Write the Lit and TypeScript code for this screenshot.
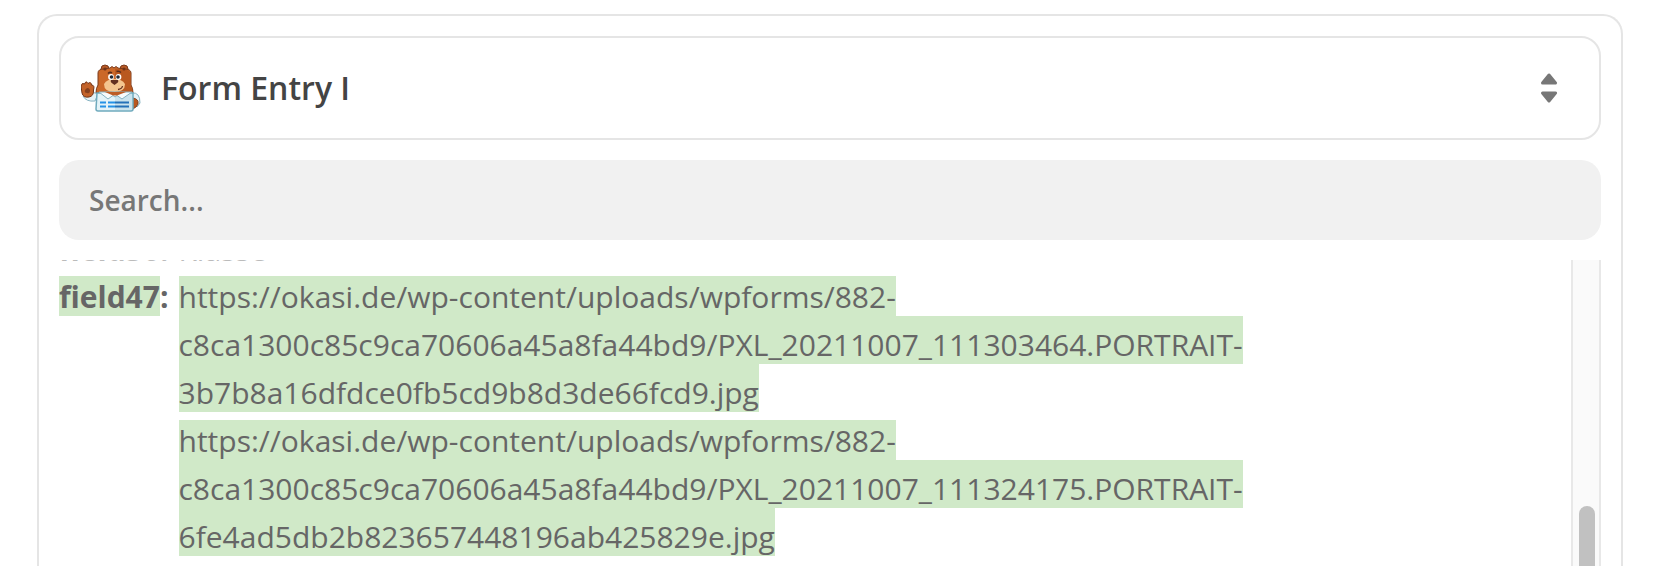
import { LitElement, html, css, svg } from "lit";
import { customElement, property } from "lit/decorators.js";

interface Entry {
  label: string;
  marked: boolean;
  values: string[][];
}

const entries: Entry[] = [
  { label: "field36", marked: false, values: [["Klasse"]] },
  {
    label: "field47",
    marked: true,
    values: [
      [
        "https://okasi.de/wp-content/uploads/wpforms/882-",
        "c8ca1300c85c9ca70606a45a8fa44bd9/PXL_20211007_111303464.PORTRAIT-",
        "3b7b8a16dfdce0fb5cd9b8d3de66fcd9.jpg",
      ],
      [
        "https://okasi.de/wp-content/uploads/wpforms/882-",
        "c8ca1300c85c9ca70606a45a8fa44bd9/PXL_20211007_111324175.PORTRAIT-",
        "6fe4ad5db2b823657448196ab425829e.jpg",
      ],
    ],
  },
];

const bear = svg`
  <g stroke="#7a3a1c" stroke-width="1">
    <circle cx="25" cy="5" r="4" fill="#b75a26"/><circle cx="44" cy="5" r="4" fill="#b75a26"/>
    <path d="M16 29 Q16 24 18 21 V9 Q18 5 24 5 L30 4 L32 2.500 L34 4 L36 2.500 L38 4 L44 5 Q51 5 51 9 V21 Q53 24 53 29 Z" fill="#cb6829"/>
  </g>
  <path d="M35 4.500 L44 5.500 Q50.500 6 50.500 10 V21 Q52.500 24 52.500 29 H35Z" fill="#b9581f"/>
  <circle cx="25" cy="5" r="1.600" fill="#713317"/><circle cx="44" cy="5" r="1.600" fill="#713317"/>
  <path d="M24 20 Q27 15 34.500 15 Q42 15 45 20 Q45 28 34.500 28 Q24 28 24 20Z" fill="#f4c58f"/>
  <path d="M28 9.500 Q30 7.500 32 9 M36.500 7.500 Q39 6.500 41 8.500" fill="none" stroke="#572b1c" stroke-width="1.500"/>
  <circle cx="31" cy="13" r="2.900" fill="#fff"/><circle cx="38.500" cy="13" r="2.900" fill="#fff"/>
  <circle cx="31.500" cy="13" r="1.800" fill="#202936"/><circle cx="38" cy="13" r="1.800" fill="#202936"/>
  <path d="M31 16 H38 Q39 18 36.500 19.500 L34.500 21 L32.500 19.500 Q30 18 31 16Z" fill="#633020"/>
  <path d="M38 25.500 Q42 25 42.500 22" fill="none" stroke="#633020" stroke-width="1.300"/>
  <path d="M3 32 Q6 38 15 37 L18 30 L12 28Z M52 29 Q60 28 60 39 L57 43 L52 38Z" fill="#e4f1f6" stroke="#86b3c2"/>
  <path d="M1 22 Q2 18 4.500 20 Q6 16 8 19.500 Q11 17 11.500 21 Q15 21 13.500 26 Q14 32 9 33 Q3 34 2 29Z" fill="#c36229" stroke="#713317"/>
  <path d="M5 26 Q8 22 10 26 Q10 30 7 29 Q4 29 5 26Z" fill="#85401e"/>
  <path d="M53 34 Q59 35 58 40 Q57 43 53 45Z" fill="#b9581f" stroke="#713317" stroke-width=".8"/>
  <path d="M17 29 H53 V45 Q53 47 51 47 H18 Q16 47 16 45Z" fill="#e3f3f8" stroke="#6faabd" stroke-width="1.500"/>
  <path d="M35 30 H52 V46 H35Z" fill="#cae3ed"/>
  <path d="M19 28 L28 35 L33 31.500 L35 33 L37 31.500 L42 35 L52 28Z" fill="#f7fbfc" stroke="#86b3c2"/>
  <path d="M25 28 H46 L37 31.500 H33Z" fill="#bd5c24"/>
  <path d="M20 38.500 H26 M20 42.500 H26 M28 38.500 H35 M28 42.500 H35" stroke="#2492e6" stroke-width="2"/>
  <path d="M35 38.500 H49 M35 42.500 H49" stroke="#2471b8" stroke-width="2"/>
`;

@customElement("entry-row")
class EntryRow extends LitElement {
  @property({ attribute: false }) entry!: Entry;

  static styles = css`
    .row { display: flex; line-height: 41px; }
    .plain { line-height: 43px; color: #bbb; }
    .label { height: 40px; margin: 8px 10px 0 0; font-weight: 700; flex: none; }
    mark { color: inherit; background: #d0e9c8; }
    .label mark { display: inline-block; height: 40px; }
    .values { min-width: 0; }
    .value { display: flex; flex-direction: column; align-items: flex-start; margin: 0; }
    .line { display: block; box-sizing: border-box; height: 48px; padding-top: 8px; }
    .line:first-child { height: 40px; margin-top: 8px; padding-top: 0; }
  `;

  render() {
    const { label, marked, values } = this.entry;
    return html`
      <div class=${marked ? "row" : "row plain"}>
        <div class="label">${marked ? html`<mark>${label}</mark>` : label}:</div>
        <div class="values">
          ${values.map(
            (lines) => html`<p class="value">
              ${lines.map((l) => (marked ? html`<mark class="line">${l}</mark>` : html`<span class="line">${l}</span>`))}
            </p>`
          )}
        </div>
      </div>
    `;
  }
}

@customElement("app-root")
class AppRoot extends LitElement {
  static styles = css`
    :host {
      display: block;
      box-sizing: border-box;
      height: 100vh;
      overflow: hidden;
      padding: 14px 53px 0 37px;
      background: #fff;
      color: #666;
      font-family: "Open Sans", "Noto Sans", sans-serif;
      font-size: 30px;
    }
    * { box-sizing: border-box; }
    .panel {
      display: flex;
      flex-direction: column;
      gap: 20px;
      height: 100%;
      padding: 20px 20px 0;
      border: 2px solid #e5e5e5;
      border-bottom: 0;
      border-radius: 20px 20px 0 0;
    }
    .picker {
      display: flex;
      align-items: center;
      flex: none;
      gap: 20px;
      width: 100%;
      padding: 26px 40px 26px 20px;
      border: 2px solid #e5e5e5;
      border-radius: 20px;
      background: #fff;
      color: #444;
      font: inherit;
      font-size: 32px;
      font-weight: 600;
      line-height: 48px;
      text-align: left;
    }
    .bear { width: 60px; height: 48px; flex: none; }
    .name { flex: 1; }
    .arrows { width: 20px; height: 30px; flex: none; }
    .search {
      flex: none;
      width: 100%;
      height: 80px;
      padding: 0 30px;
      border: 0;
      border-radius: 20px;
      background: #f1f1f1;
      color: #444;
      font: inherit;
      font-size: 28px;
      font-weight: 600;
    }
    .search::placeholder { color: #777; opacity: 1; }
    .results { display: flex; flex: 1; min-height: 0; }
    .list {
      display: flex;
      flex-direction: column;
      justify-content: flex-end;
      flex: 1;
      min-width: 0;
      overflow: hidden;
      padding-bottom: 10px;
    }
    entry-row { display: block; flex: none; }
    .track {
      flex: none;
      width: 30px;
      padding: 246px 4px 0 6px;
      border: solid #e8e8e8;
      border-width: 0 2px;
      background: #fafafa;
      overflow: hidden;
    }
    .thumb { width: 16px; height: 120px; border-radius: 8px; background: #c1c1c1; }
  `;

  render() {
    return html`
      <main class="panel">
        <button class="picker" type="button" aria-haspopup="listbox">
          <svg class="bear" viewBox="1 0 60 48" aria-hidden="true">${bear}</svg>
          <span class="name">Form Entry I</span>
          <svg class="arrows" viewBox="-1 0 20 30" aria-hidden="true">
            <path d="M9 2 L15.500 10 H2.500Z M9 28 L15.500 20 H2.500Z" fill="#777" stroke="#777" stroke-width="3" stroke-linejoin="round" />
          </svg>
        </button>
        <input class="search" type="search" placeholder="Search..." aria-label="Search" />
        <div class="results">
          <div class="list">${entries.map((e) => html`<entry-row .entry=${e}></entry-row>`)}</div>
          <div class="track" aria-hidden="true"><div class="thumb"></div></div>
        </div>
      </main>
    `;
  }
}
